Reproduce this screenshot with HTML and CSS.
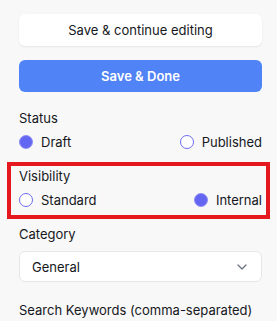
FILE: index.html
```html
<!DOCTYPE html>
<html>
<head>
<meta charset="utf-8">
<link rel="stylesheet" href="styles.css">
</head>
<body>
<div class="panel">
  <button class="btn btn-secondary">Save &amp; continue editing</button>
  <button class="btn btn-primary">Save &amp; Done</button>

  <div class="field">
    <div class="label">Status</div>
    <div class="radio-row">
      <label class="radio"><span class="dot checked"></span>Draft</label>
      <label class="radio"><span class="dot"></span>Published</label>
    </div>
  </div>

  <div class="field highlight">
    <div class="label">Visibility</div>
    <div class="radio-row">
      <label class="radio"><span class="dot"></span>Standard</label>
      <label class="radio"><span class="dot checked"></span>Internal</label>
    </div>
  </div>

  <div class="field">
    <div class="label">Category</div>
    <div class="select">
      <span>General</span>
      <svg class="chev" width="10" height="6" viewBox="0 0 10 6"><path d="M1 1l4 4 4-4" fill="none" stroke="#6b7280" stroke-width="1.3" stroke-linecap="round" stroke-linejoin="round"/></svg>
    </div>
  </div>

  <div class="field field-last">
    <div class="label">Search Keywords (comma-separated)</div>
    <div class="input"></div>
  </div>
</div>
</body>
</html>
```
FILE: styles.css
```css
* { box-sizing: border-box; }
html, body { margin: 0; padding: 0; }
body {
  background: #f8f8f8;
  font-family: Inter, "Noto Sans", sans-serif;
  color: #15171c;
  overflow: hidden;
}
.panel {
  padding: 14px 15px 0 19px;
  display: flex;
  flex-direction: column;
}
.btn {
  display: block;
  width: 100%;
  height: 32px;
  border: none;
  border-radius: 6px;
  font-family: Inter, "Noto Sans", sans-serif;
  font-size: 13px;
  cursor: pointer;
}
.btn-secondary {
  background: #fff;
  color: #15171c;
  box-shadow: 0 1px 2px rgba(0,0,0,0.08);
}
.btn-primary {
  margin-top: 14px;
  background: #5083f6;
  color: #fff;
  font-weight: 600;
}
.field {
  margin-top: 16px;
  display: flex;
  flex-direction: column;
}
.field + .field { margin-top: 14px; }
.field + .field-last { margin-top: 18px; }
.label {
  font-size: 13px;
  line-height: 20px;
  white-space: nowrap;
}
.radio-row {
  margin-top: 4px;
  display: flex;
  justify-content: space-between;
  align-items: center;
  height: 20px;
}
.radio {
  display: flex;
  align-items: center;
  gap: 8px;
  font-size: 13px;
}
.dot {
  width: 14px;
  height: 14px;
  border-radius: 50%;
  border: 1px solid #6e6cf2;
  background: #fff;
}
.dot.checked {
  background: #6366f1;
  border-color: #9190f6;
}
.highlight { position: relative; }
.highlight::after {
  content: "";
  position: absolute;
  left: -12px;
  right: -8px;
  top: -4px;
  bottom: -9px;
  border: 4px solid #e5181f;
  pointer-events: none;
}
.select {
  margin-top: 7px;
  height: 31px;
  background: #fff;
  border: 1px solid #e6e7ea;
  border-radius: 6px;
  display: flex;
  align-items: center;
  justify-content: space-between;
  padding: 0 14px 0 12px;
  font-size: 13px;
}
.input {
  margin-top: 7px;
  height: 31px;
  background: #fff;
  border: 1px solid #e6e7ea;
  border-radius: 6px;
}
```
